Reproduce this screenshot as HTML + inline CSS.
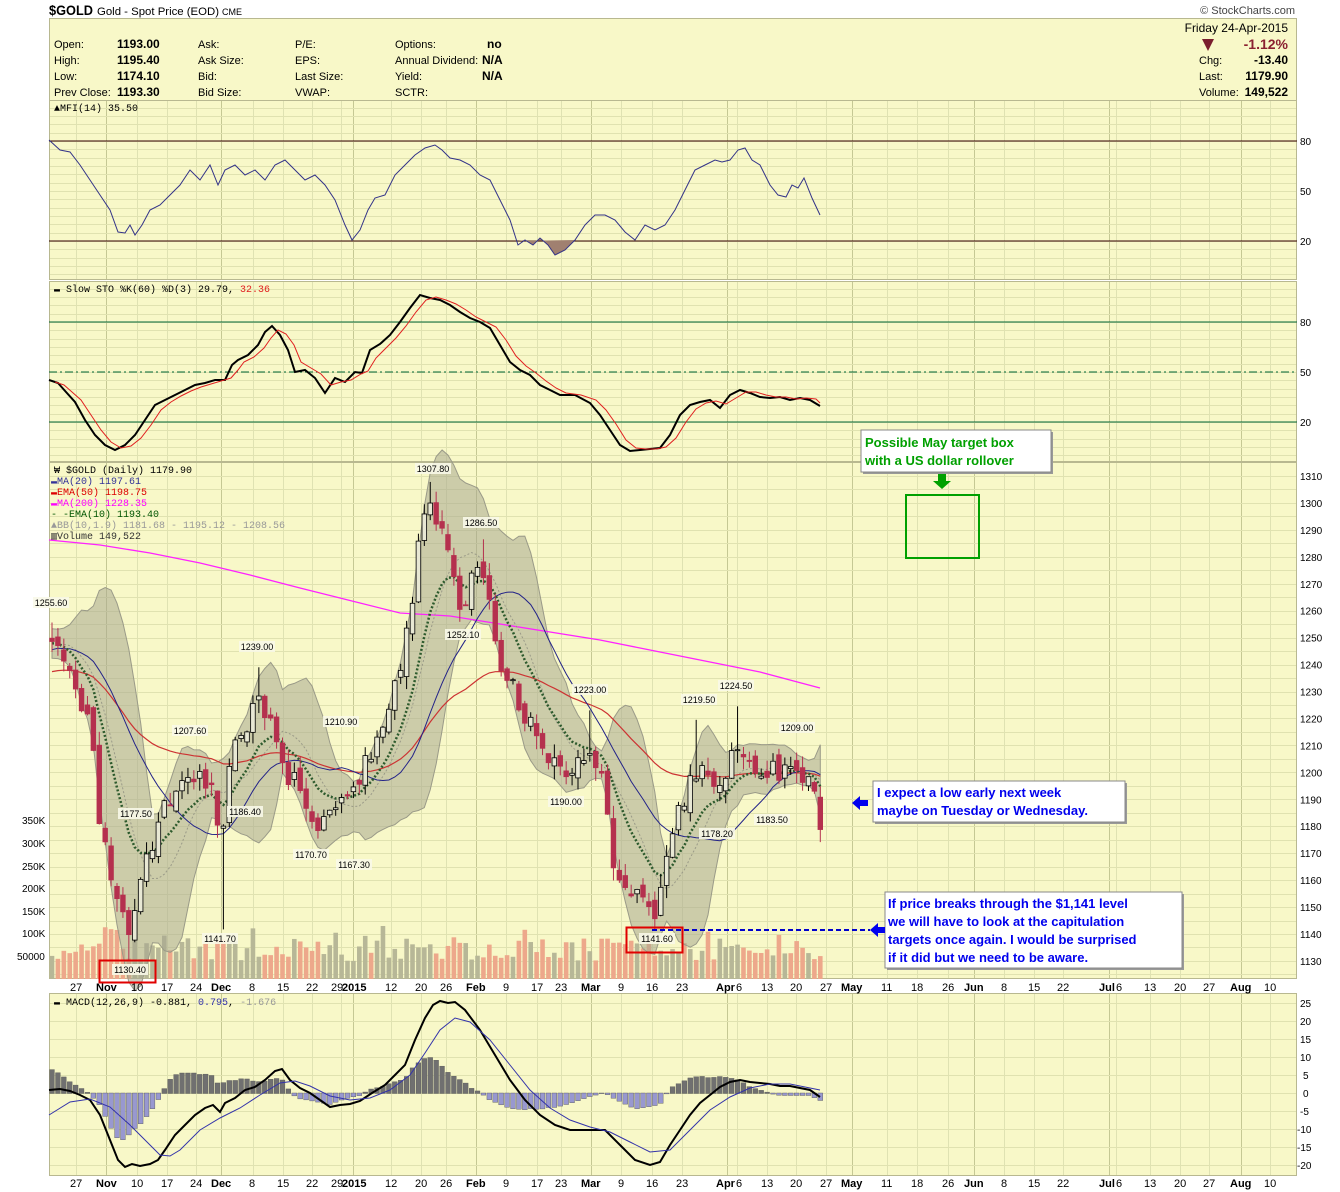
<!DOCTYPE html>
<html><head><meta charset="utf-8"><style>
body{margin:0;background:#fff;}
svg{display:block;font-family:"Liberation Sans",sans-serif;}
.t{font-size:11px;fill:#000}
.b{font-size:12px;font-weight:bold;fill:#000}
.ax{font-size:10px;fill:#000}
.lb{font-size:9px;fill:#000}
.dt{font-size:11px;fill:#000}
.mo{font-size:11px;font-weight:bold;fill:#000}
.lg{font-size:10px;font-family:"Liberation Mono",monospace}
</style></head><body>
<svg id="s" width="1340" height="1192" viewBox="0 0 1340 1192" xmlns="http://www.w3.org/2000/svg">
<text x="49" y="15" style="font-size:14px;font-weight:bold" textLength="44" lengthAdjust="spacingAndGlyphs">$GOLD</text>
<text x="97" y="15" style="font-size:11px" textLength="122" lengthAdjust="spacingAndGlyphs">Gold - Spot Price (EOD)</text>
<text x="222" y="15" style="font-size:9px">CME</text>
<text x="1295" y="14" text-anchor="end" style="font-size:11px;fill:#444">© StockCharts.com</text>
<rect x="49.5" y="18.5" width="1247" height="82" fill="#f8f8c8" stroke="#b8b890"/>
<g class="t">
<text x="54" y="48" class="t">Open:</text><text x="54" y="64" class="t">High:</text><text x="54" y="80" class="t">Low:</text><text x="54" y="96" class="t">Prev Close:</text>
<text x="117" y="48" class="b">1193.00</text><text x="117" y="64" class="b">1195.40</text><text x="117" y="80" class="b">1174.10</text><text x="117" y="96" class="b">1193.30</text>
<text x="198" y="48" class="t">Ask:</text><text x="198" y="64" class="t">Ask Size:</text><text x="198" y="80" class="t">Bid:</text><text x="198" y="96" class="t">Bid Size:</text>
<text x="295" y="48" class="t">P/E:</text><text x="295" y="64" class="t">EPS:</text><text x="295" y="80" class="t">Last Size:</text><text x="295" y="96" class="t">VWAP:</text>
<text x="395" y="48" class="t">Options:</text><text x="395" y="64" class="t">Annual Dividend:</text><text x="395" y="80" class="t">Yield:</text><text x="395" y="96" class="t">SCTR:</text>
<text x="487" y="48" class="b">no</text><text x="482" y="64" class="b">N/A</text><text x="482" y="80" class="b">N/A</text>
<text x="1288" y="32" text-anchor="end" class="t" style="font-size:12px">Friday  24-Apr-2015</text>
<path d="M1202 39 L1214 39 L1208 51 Z" fill="#7a1e2e"/>
<text x="1288" y="49" text-anchor="end" style="font-size:14px;font-weight:bold;fill:#8a2030">-1.12%</text>
<text x="1199" y="64" class="t">Chg:</text><text x="1288" y="64" text-anchor="end" class="b">-13.40</text>
<text x="1199" y="80" class="t">Last:</text><text x="1288" y="80" text-anchor="end" class="b">1179.90</text>
<text x="1199" y="96" class="t">Volume:</text><text x="1288" y="96" text-anchor="end" class="b">149,522</text>
</g>
<rect x="49.5" y="100.5" width="1247" height="179" fill="#f8f8c8" stroke="#b8b890"/>
<rect x="49.5" y="281.5" width="1247" height="180" fill="#f8f8c8" stroke="#b8b890"/>
<rect x="49.5" y="462.5" width="1247" height="516" fill="#f8f8c8" stroke="#b8b890"/>
<rect x="49.5" y="993.5" width="1247" height="182" fill="#f8f8c8" stroke="#b8b890"/>
<g id="grid"></g>
<line x1="49" y1="141" x2="1297" y2="141" stroke="#300" stroke-width="1"/>
<line x1="49" y1="241" x2="1297" y2="241" stroke="#300" stroke-width="1"/>
<path d="M518 241 L525 240 L533 245 L540 238 L548 245 L555 255 L565 250 L575 240 Z" fill="#a08070"/>
<polyline fill="none" stroke="#333388" stroke-width="1" points="49,140 60,150 70,152 80,165 90,180 100,195 110,210 118,232 125,233 130,225 135,235 142,225 150,210 160,205 170,195 180,185 190,170 200,180 210,165 218,185 225,170 235,165 245,175 255,170 265,180 275,165 285,160 295,170 305,180 315,175 325,185 335,200 345,225 352,240 360,230 368,210 375,198 385,195 395,175 405,165 415,155 425,148 435,145 442,150 450,158 460,160 470,165 480,175 490,180 500,200 510,220 518,245 525,240 533,245 540,238 548,245 555,255 565,250 575,240 585,225 595,215 605,215 615,220 625,232 635,240 645,225 655,230 665,225 675,210 685,190 695,170 705,165 715,160 722,162 730,160 738,150 745,148 752,160 760,165 770,185 778,195 786,197 792,185 798,188 804,178 812,198 820,215"/>
<text x="54" y="111" class="lg" style="fill:#000">▲MFI(14) 35.50</text>
<text x="1300" y="145" class="ax">80</text><text x="1300" y="195" class="ax">50</text><text x="1300" y="245" class="ax">20</text>
<line x1="49" y1="322" x2="1297" y2="322" stroke="#006633"/>
<line x1="49" y1="372" x2="1297" y2="372" stroke="#006633" stroke-dasharray="8,3,2,3"/>
<line x1="49" y1="422" x2="1297" y2="422" stroke="#006633"/>
<polyline id="stoK" fill="none" stroke="#000" stroke-width="2" points="49,380 58,383 66,392 75,402 85,420 95,435 105,445 115,450 125,445 135,435 145,420 155,405 165,400 175,395 185,390 195,385 205,383 215,380 225,380 232,365 238,360 248,355 258,345 265,332 272,326 280,335 288,350 295,372 305,370 315,378 325,393 335,378 345,382 355,372 362,373 370,350 380,344 390,335 400,322 410,308 420,295 430,298 440,300 450,305 460,312 470,318 480,322 490,328 500,345 510,362 520,370 530,375 540,385 550,390 560,395 575,395 590,403 600,415 610,430 620,445 630,451 640,450 650,449 660,448 670,435 680,415 690,405 700,402 710,400 720,408 730,395 740,390 750,393 760,397 770,398 780,397 790,400 800,398 810,400 820,406"/>
<polyline fill="none" stroke="#e02020" stroke-width="1" transform="translate(6,0)" points="49,382 58,385 66,392 75,400 85,415 95,430 105,442 115,448 125,446 135,438 145,425 155,410 165,402 175,396 185,391 195,387 205,384 215,381 225,378 232,370 238,362 248,357 258,348 265,338 272,330 280,334 288,345 295,362 305,368 315,374 325,385 335,382 345,380 355,374 362,371 370,358 380,348 390,338 400,326 410,312 420,300 430,297 440,300 450,304 460,310 470,317 480,322 490,327 500,340 510,356 520,366 530,373 540,381 550,388 560,393 575,395 590,400 600,410 610,424 620,440 630,448 640,449 650,449 660,447 670,438 680,422 690,409 700,403 710,401 720,404 730,398 740,392 750,392 760,395 770,397 780,397 790,399 800,398 810,399 814,403"/>
<text x="54" y="292" class="lg">▬ Slow STO %K(60) %D(3) 29.79, <tspan fill="#e02020">32.36</tspan></text>
<text x="1300" y="326" class="ax">80</text><text x="1300" y="376" class="ax">50</text><text x="1300" y="426" class="ax">20</text>
<g id="vol"></g>
<g id="bb"></g>
<polyline fill="none" stroke="#ff22ff" stroke-width="1.3" points="49,540 100,545 150,553 200,563 250,575 300,588 360,603 400,613 450,616 500,624 550,632 600,640 650,650 700,660 760,672 820,688"/>
<g id="lines"></g>
<g id="candles"></g>
<g id="plab" class="lb"></g>
<g class="lg">
<text x="54" y="473" fill="#000">₩ $GOLD (Daily) 1179.90</text>
<text x="51" y="484" fill="#333399">▬MA(20) 1197.61</text>
<text x="51" y="495" fill="#dd0000">▬EMA(50) 1198.75</text>
<text x="51" y="506" fill="#ff00ff">▬MA(200) 1228.35</text>
<text x="51" y="517" fill="#005500">- -EMA(10) 1193.40</text>
<text x="51" y="528" fill="#999">▲BB(10,1.9) 1181.68 - 1195.12 - 1208.56</text>
<text x="51" y="539" fill="#333">▥Volume 149,522</text>
</g>
<g class="ax" id="pax"></g>
<g class="ax">
<text x="22" y="824">350K</text><text x="22" y="847">300K</text><text x="22" y="870">250K</text><text x="22" y="892">200K</text><text x="22" y="915">150K</text><text x="22" y="937">100K</text><text x="17" y="960">50000</text>
</g>
<rect x="99.5" y="960.5" width="56" height="22" fill="none" stroke="#e00000" stroke-width="2"/>
<rect x="626.5" y="927.5" width="56" height="25" fill="none" stroke="#e00000" stroke-width="2"/>
<line x1="652" y1="930" x2="870" y2="930" stroke="#0000cc" stroke-width="2" stroke-dasharray="5,3"/>
<rect x="863" y="432" width="190" height="42" fill="#999"/>
<rect x="861" y="430" width="190" height="42" fill="#fff" stroke="#888"/>
<text x="865" y="447" style="font-size:13px;font-weight:bold;fill:#00a000">Possible May target box</text>
<text x="865" y="465" style="font-size:13px;font-weight:bold;fill:#00a000">with a US dollar rollover</text>
<path d="M938 474 H946 V481 H951 L942 489 L933 481 H938 Z" fill="#00a000"/>
<rect x="906" y="495" width="73" height="63" fill="none" stroke="#00a000" stroke-width="2"/>
<rect x="875" y="783" width="252" height="41" fill="#999"/>
<rect x="873" y="781" width="252" height="41" fill="#fff" stroke="#888"/>
<text x="877" y="797" style="font-size:13px;font-weight:bold;fill:#0000ee">I expect a low early next week</text>
<text x="877" y="815" style="font-size:13px;font-weight:bold;fill:#0000ee">maybe on Tuesday or Wednesday.</text>
<path d="M852 803 L860 796 V800 H868 V806 H860 V810 Z" fill="#0000ee"/>
<rect x="887" y="894" width="297" height="76" fill="#999"/>
<rect x="885" y="892" width="297" height="76" fill="#fff" stroke="#888"/>
<text x="888" y="908" style="font-size:13px;font-weight:bold;fill:#0000ee">If price breaks through the $1,141 level</text>
<text x="888" y="926" style="font-size:13px;font-weight:bold;fill:#0000ee">we will have to look at the capitulation</text>
<text x="888" y="944" style="font-size:13px;font-weight:bold;fill:#0000ee">targets once again. I would be surprised</text>
<text x="888" y="962" style="font-size:13px;font-weight:bold;fill:#0000ee">if it did but we need to be aware.</text>
<path d="M870 930 L878 923 V927 H885 V933 H878 V937 Z" fill="#0000ee"/>
<g id="hist"></g>
<polyline id="macd" fill="none" stroke="#000" stroke-width="2" points="49,1090 60,1089 70,1091 80,1095 90,1100 100,1115 110,1140 118,1160 125,1167 132,1164 140,1166 150,1164 158,1160 165,1150 175,1135 185,1125 195,1115 205,1108 213,1105 220,1112 225,1103 235,1098 245,1090 255,1087 265,1080 275,1071 282,1069 290,1080 300,1088 310,1093 320,1100 330,1107 340,1105 350,1104 360,1101 372,1093 385,1085 395,1075 405,1065 415,1040 425,1018 433,1005 440,1001 448,1003 455,1002 465,1010 480,1030 495,1055 510,1080 525,1100 540,1115 555,1125 570,1130 590,1130 605,1130 620,1145 635,1160 650,1165 660,1162 670,1145 680,1130 690,1115 700,1103 710,1095 720,1087 730,1082 740,1080 750,1082 760,1083 770,1084 780,1086 790,1086 800,1088 810,1090 820,1097"/>
<polyline id="sig" fill="none" stroke="#3333aa" stroke-width="1" points="49,1115 70,1102 90,1099 110,1107 130,1125 150,1145 160,1155 170,1156 180,1150 200,1130 220,1118 240,1108 260,1095 280,1083 295,1081 310,1086 330,1096 350,1100 370,1098 390,1090 410,1075 425,1053 440,1030 455,1018 470,1022 490,1040 510,1065 530,1090 550,1108 570,1120 590,1127 610,1132 630,1142 650,1152 670,1150 690,1130 710,1110 730,1097 750,1088 770,1084 790,1084 810,1088 820,1090"/>
<text x="54" y="1005" class="lg">▬ MACD(12,26,9) -0.881, <tspan fill="#3333aa">0.795</tspan>, <tspan fill="#999">-1.676</tspan></text>
<g class="ax">
<text x="1300" y="1007">25</text><text x="1300" y="1025">20</text><text x="1300" y="1043">15</text><text x="1300" y="1061">10</text><text x="1303" y="1079">5</text><text x="1303" y="1097">0</text><text x="1300" y="1115">-5</text><text x="1297" y="1133">-10</text><text x="1297" y="1151">-15</text><text x="1297" y="1169">-20</text>
</g>
<g id="d1">
<text x="70" y="991" class="dt">27</text><text x="96" y="991" class="mo">Nov</text><text x="131" y="991" class="dt">10</text><text x="161" y="991" class="dt">17</text><text x="190" y="991" class="dt">24</text><text x="211" y="991" class="mo">Dec</text><text x="249" y="991" class="dt">8</text><text x="277" y="991" class="dt">15</text><text x="306" y="991" class="dt">22</text><text x="331" y="991" class="dt">29</text><text x="342" y="991" class="mo">2015</text><text x="385" y="991" class="dt">12</text><text x="415" y="991" class="dt">20</text><text x="440" y="991" class="dt">26</text><text x="466" y="991" class="mo">Feb</text><text x="503" y="991" class="dt">9</text><text x="531" y="991" class="dt">17</text><text x="555" y="991" class="dt">23</text><text x="581" y="991" class="mo">Mar</text><text x="618" y="991" class="dt">9</text><text x="646" y="991" class="dt">16</text><text x="676" y="991" class="dt">23</text><text x="716" y="991" class="mo">Apr</text><text x="736" y="991" class="dt">6</text><text x="761" y="991" class="dt">13</text><text x="790" y="991" class="dt">20</text><text x="820" y="991" class="dt">27</text><text x="841" y="991" class="mo">May</text><text x="881" y="991" class="dt">11</text><text x="911" y="991" class="dt">18</text><text x="942" y="991" class="dt">26</text><text x="964" y="991" class="mo">Jun</text><text x="1001" y="991" class="dt">8</text><text x="1028" y="991" class="dt">15</text><text x="1057" y="991" class="dt">22</text><text x="1099" y="991" class="mo">Jul</text><text x="1116" y="991" class="dt">6</text><text x="1144" y="991" class="dt">13</text><text x="1174" y="991" class="dt">20</text><text x="1203" y="991" class="dt">27</text><text x="1230" y="991" class="mo">Aug</text><text x="1264" y="991" class="dt">10</text>
</g>
<use href="#d1" y="196"/>
</svg>
<script>
(function(){
var NS="http://www.w3.org/2000/svg";
function el(p,t,a){var e=document.createElementNS(NS,t);for(var k in a)e.setAttribute(k,a[k]);p.appendChild(e);return e;}
function $(i){return document.getElementById(i);}
var seed=98765;function R(){seed=(seed*16807)%2147483647;return (seed-1)/2147483646;}
var g=$("grid");
var wk=[76,137,167,196,253,283,312,341,391,421,446,506,537,561,621,652,682,737,767,796,826,887,917,948,1004,1034,1063,1116,1150,1180,1209,1270];
var mo=[106,221,353,476,591,727,852,974,1109,1241];
var panels=[[101,279],[282,461],[463,978],[994,1175]];
panels.forEach(function(p){
 wk.forEach(function(x){el(g,"line",{x1:x+.5,x2:x+.5,y1:p[0],y2:p[1],stroke:"#dfe2b2"});});
 mo.forEach(function(x){el(g,"line",{x1:x+.5,x2:x+.5,y1:p[0],y2:p[1],stroke:"#c5c894"});});
});
function hl(y0,y1,st,s0){for(var y=s0;y<y1;y+=st){if(y>y0)el(g,"line",{x1:50,x2:1296,y1:Math.round(y)+.5,y2:Math.round(y)+.5,stroke:"#e0e2b0"});}}
hl(101,279,8.33,107.7);hl(282,461,8.33,288.7);hl(463,978,13.47,476-13.47);hl(994,1175,18,1003);
var pax=$("pax");
function Y(p){return 476+(1310-p)*2.694;}
for(var p=1310;p>=1130;p-=10){var t=el(pax,"text",{x:1300,y:Y(p)+4});t.textContent=p;}
var kp=[[-302,1212],[-200,1222],[-100,1238],[52,1250],[65,1238],[85,1225],[95,1200],[100,1180],[110,1165],[122,1148],[128,1140],[140,1160],[150,1172],[165,1188],[190,1200],[212,1198],[221,1165],[228,1205],[245,1215],[260,1228],[280,1205],[300,1192],[315,1178],[330,1185],[345,1190],[360,1200],[380,1215],[395,1230],[405,1245],[412,1265],[420,1290],[432,1298],[445,1288],[460,1262],[470,1268],[480,1282],[495,1248],[505,1238],[520,1225],[535,1215],[545,1205],[560,1200],[575,1205],[590,1210],[605,1195],[612,1170],[625,1160],[640,1152],[655,1148],[665,1165],[678,1188],[690,1195],[700,1200],[712,1192],[722,1195],[740,1212],[755,1198],[770,1203],[785,1200],[800,1200],[812,1195],[820,1178]];
function ip(x){for(var i=0;i<kp.length-1;i++){if(x<=kp[i+1][0]){var a=kp[i],b=kp[i+1];return a[1]+(b[1]-a[1])*(x-a[0])/(b[0]-a[0]);}}return kp[kp.length-1][1];}
var W=5.91,N0=60,N=131,C=[],O=[],H=[],L=[],X=[];
for(var i=-N0;i<N;i++){var x=52+i*W;X.push(x);var c=ip(x)+(R()-.5)*9;var o=C.length?C[C.length-1]+(R()-.5)*5:c;C.push(c);O.push(o);H.push(Math.max(o,c)+R()*5);L.push(Math.min(o,c)-R()*5);}
function fix(x,h,l){var i=Math.round((x-52)/W)+N0;if(h)H[i]=h;if(l)L[i]=l;}
fix(52,1255.6);fix(128,0,1130.4);fix(221,0,1141.7);fix(258,1239);fix(432,1307.8);fix(481,1286.5);fix(652,0,1141.6);fix(736,1224.5);fix(699,1219.5);fix(590,1223);fix(820,0,1174.1);
var n=C.length;
function sma(k){var r=[];for(var i=0;i<n;i++){var s=0,m=0;for(var j=Math.max(0,i-k+1);j<=i;j++){s+=C[j];m++;}r.push(s/m);}return r;}
function ema(k){var r=[],a=2/(k+1),e=C[0];for(var i=0;i<n;i++){e=i?e+a*(C[i]-e):C[0];r.push(e);}return r;}
var m20=sma(20),e50=ema(50),e10=ema(10),m10=sma(10),up=[],dn=[];
for(var i=0;i<n;i++){var s=0,m=0;for(var j=Math.max(0,i-9);j<=i;j++){s+=Math.pow(C[j]-m10[i],2);m++;}var sd=Math.sqrt(s/m);up.push(m10[i]+1.9*sd);dn.push(m10[i]-1.9*sd);}
function pts(a){var s=[];for(var i=N0;i<n;i++)s.push(X[i].toFixed(1)+","+Y(a[i]).toFixed(1));return s;}
var vg=$("vol");
for(var i=N0;i<n;i++){var v=80000+R()*100000;if(R()<.12)v+=60000;var h=v/10000*2.25;var upc=C[i]>=C[i-1];
el(vg,"rect",{x:X[i]-2.3,y:979-h,width:4.6,height:h,fill:upc?"#b7b797":"#eda88b"});}
var bg=$("bb");var pu=pts(up),pd=pts(dn).reverse();
el(bg,"polygon",{points:pu.concat(pd).join(" "),fill:"#a8a890","fill-opacity":".55",stroke:"#9a9a88","stroke-width":"1"});
var lg=$("lines");
el(lg,"polyline",{points:pts(m10).join(" "),fill:"none",stroke:"#9a9a88","stroke-dasharray":"2,2"});
el(lg,"polyline",{points:pts(e50).join(" "),fill:"none",stroke:"#cc3333","stroke-width":"1.2"});
el(lg,"polyline",{points:pts(m20).join(" "),fill:"none",stroke:"#222288","stroke-width":"1"});
el(lg,"polyline",{points:pts(e10).join(" "),fill:"none",stroke:"#2d5a2d","stroke-width":"2.5","stroke-dasharray":"2,2"});
var cg=$("candles");
for(var i=N0;i<n;i++){var x=X[i],dnc=C[i]<O[i],col=dnc?"#b5304e":"#000";
el(cg,"line",{x1:x,x2:x,y1:Y(H[i]),y2:Y(L[i]),stroke:col,"stroke-width":"1"});
var t=Y(Math.max(O[i],C[i])),b=Y(Math.min(O[i],C[i]));if(b-t<1)b=t+1;
el(cg,"rect",{x:x-2.3,y:t,width:4.6,height:b-t,fill:dnc?"#b5304e":"#e8e8d4",stroke:dnc?"#b5304e":"#000","stroke-width":".8"});}
var lab=[["1307.80",433,470],["1286.50",481,524],["1252.10",463,636],["1255.60",51,604],["1239.00",257,648],["1207.60",190,732],["1210.90",341,723],["1177.50",136,815],["1186.40",245,813],["1170.70",311,856],["1167.30",354,866],["1141.70",220,940],["1223.00",590,691],["1219.50",699,701],["1224.50",736,687],["1209.00",797,729],["1190.00",566,803],["1178.20",717,835],["1183.50",772,821],["1130.40",130,971],["1141.60",657,940]];
var pl=$("plab");
lab.forEach(function(a){el(pl,"rect",{x:a[1]-18,y:a[2]-7,width:36,height:11,fill:"#f8f8e8","fill-opacity":".9"});var t=el(pl,"text",{x:a[1],y:a[2]+2,"text-anchor":"middle"});t.textContent=a[0];});
function pp(id){return $(id).getAttribute("points").trim().split(/\s+/).map(function(s){return s.split(",").map(Number);});}
var mp=pp("macd"),sp=pp("sig");function iv(a,x){for(var i=0;i<a.length-1;i++)if(x<=a[i+1][0]){return a[i][1]+(a[i+1][1]-a[i][1])*(x-a[i][0])/(a[i+1][0]-a[i][0]);}return a[a.length-1][1];}
var hg=$("hist");
for(var i=N0;i<n;i++){var x=X[i];var d=(iv(sp,x)-iv(mp,x));var y=d>0?1093-d:1093;el(hg,"rect",{x:x-2.4,y:y,width:4.8,height:Math.abs(d)+.5,fill:d>0?"#707070":"#9898d0",stroke:"#555","stroke-width":".4"});}
})();
</script>
</body></html>
